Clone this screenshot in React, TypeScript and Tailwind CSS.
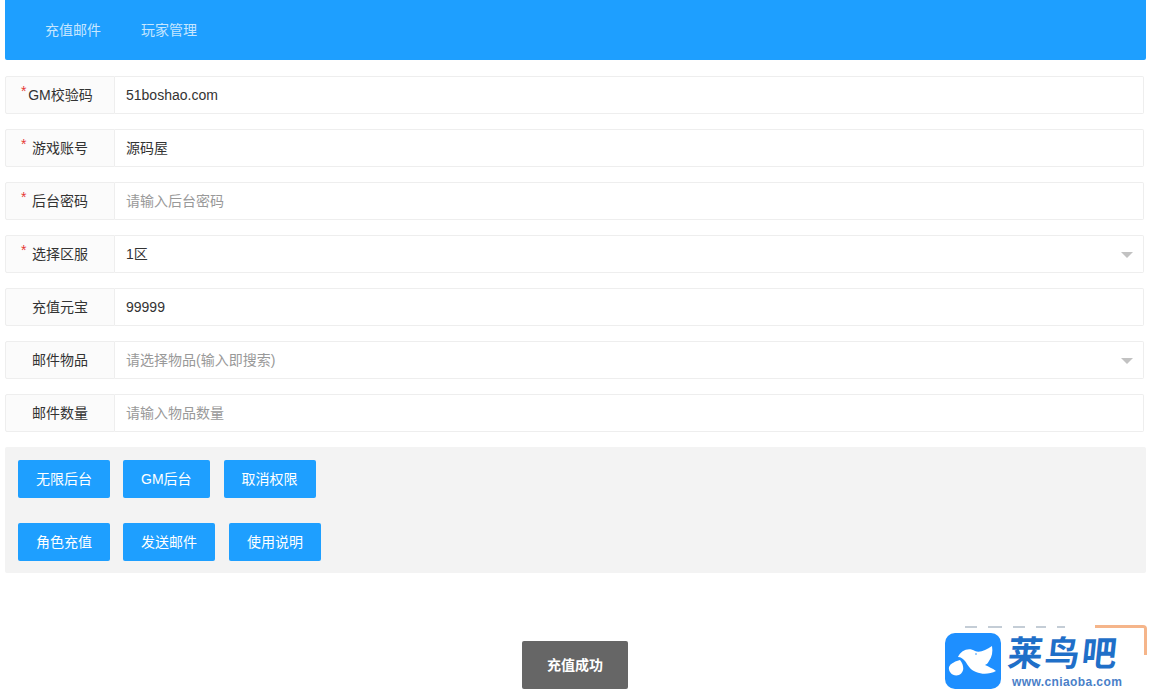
const FIELDS = [
  { label: "GM校验码", value: "51boshao.com", required: true, tight: true },
  { label: "游戏账号", value: "源码屋", required: true },
  { label: "后台密码", placeholder: "请输入后台密码", required: true },
  { label: "选择区服", value: "1区", required: true, select: true },
  { label: "充值元宝", value: "99999" },
  { label: "邮件物品", placeholder: "请选择物品(输入即搜索)", select: true },
  { label: "邮件数量", placeholder: "请输入物品数量" },
]

const BUTTON_ROWS = [
  ["无限后台", "GM后台", "取消权限"],
  ["角色充值", "发送邮件", "使用说明"],
]

type Field = {
  label: string
  value?: string
  placeholder?: string
  required?: boolean
  select?: boolean
  tight?: boolean
}

function FormRow({ field }: { field: Field }) {
  return (
    <div className="flex h-[38px] text-[14px]">
      <div className="relative flex w-[110px] shrink-0 items-center justify-center rounded-l-[2px] border border-[#eeeeee] bg-[#fbfbfb] text-[#333]">
        {field.required && (
          <span className="absolute left-[15px] top-[7px] text-[14px] leading-none text-[#e53935]">
            *
          </span>
        )}
        <span className={field.tight ? "pl-[1px]" : ""}>{field.label}</span>
      </div>
      <div className="relative flex min-w-0 flex-1 items-center rounded-r-[2px] border border-l-0 border-[#eeeeee] bg-white pl-[11px]">
        <span className={field.value ? "text-[#333]" : "text-[#999]"}>
          {field.value ?? field.placeholder}
        </span>
        {field.select && (
          <span className="absolute right-[10px] top-[16px] h-0 w-0 border-x-[6px] border-t-[6px] border-x-transparent border-t-[#c2c2c2]" />
        )}
      </div>
    </div>
  )
}

function Watermark() {
  return (
    <div className="absolute bottom-0 right-0 h-[74px] w-[236px] bg-white">
      <div className="absolute right-[4px] top-0 h-[30px] w-[52px] rounded-tr-[4px] border-r-[3px] border-t-[3px] border-[#f5b58a]" />
      <div className="absolute left-[50px] top-[1px] flex gap-[11px]">
        <span className="h-[2px] w-[12px] bg-[#c4cdd6]" />
        <span className="h-[2px] w-[14px] bg-[#c4cdd6]" />
        <span className="h-[2px] w-[12px] bg-[#c4cdd6]" />
        <span className="h-[2px] w-[10px] bg-[#c4cdd6]" />
        <span className="h-[2px] w-[8px] bg-[#c4cdd6]" />
      </div>
      <div className="absolute left-[30px] top-[8px] flex items-start gap-[7px]">
        <div className="h-[56px] w-[56px] rounded-[10px] bg-[#1e8fff]">
          <svg viewBox="0 0 56 56" className="h-[56px] w-[56px]">
            <path
              d="M13 24c3-7 11-10 17-6 5 2 11-1 17-5 1 6 0 11-3 15-1 2-2 3-4 4 4 2 7 3 11 6-6 3-13 4-20 1-6-2-8-7-11-11-2-2-4-4-7-4z"
              fill="#fff"
            />
            <path
              d="M15 27c4 5 5 12-1 15-6 2-11-3-10-8 2-4 7-6 11-7z"
              fill="#fff"
            />
            <circle cx="31" cy="21" r="0.8" fill="#1e8fff" />
          </svg>
        </div>
        <div className="flex flex-col items-start">
          <div
            className="h-[36px] -skew-x-6 text-[35px] font-bold leading-[36px] tracking-[2px] text-[#1f6fc8]"
            style={{ fontFamily: '"Noto Sans CJK SC", sans-serif' }}
          >
            莱鸟吧
          </div>
          <div className="ml-[4px] mt-[6px] text-[12px] font-bold leading-[14px] tracking-[0.4px] text-[#4a80c8]">
            www.cniaoba.com
          </div>
        </div>
      </div>
    </div>
  )
}

export default function App() {
  return (
    <div
      className="relative h-[699px] overflow-hidden bg-white px-[5px]"
      style={{ fontFamily: '"Liberation Sans", "Noto Sans CJK SC", sans-serif' }}
    >
      <header className="flex h-[60px] items-center gap-[40px] rounded-b-[2px] bg-[#1e9fff] pl-[40px] text-[14px] text-white/75">
        <span>充值邮件</span>
        <span>玩家管理</span>
      </header>

      <form className="mr-[2px] mt-[16px] flex flex-col gap-[15px]">
        {FIELDS.map((field) => (
          <FormRow key={field.label} field={field} />
        ))}
      </form>

      <div className="mt-[15px] flex h-[126px] flex-col gap-[25px] rounded-[2px] bg-[#f3f3f3] px-[13px] py-[13px]">
        {BUTTON_ROWS.map((row) => (
          <div key={row[0]} className="flex gap-[13px]">
            {row.map((label) => (
              <button
                key={label}
                type="button"
                className="h-[38px] rounded-[2px] bg-[#1e9fff] px-[18px] text-[14px] text-white last:ml-[1px]"
              >
                {label}
              </button>
            ))}
          </div>
        ))}
      </div>

      <div className="absolute left-[522px] top-[641px] flex h-[48px] w-[106px] items-center justify-center rounded-[2px] bg-[#666] text-[14px] font-bold text-white">
        充值成功
      </div>

      <Watermark />
    </div>
  )
}
